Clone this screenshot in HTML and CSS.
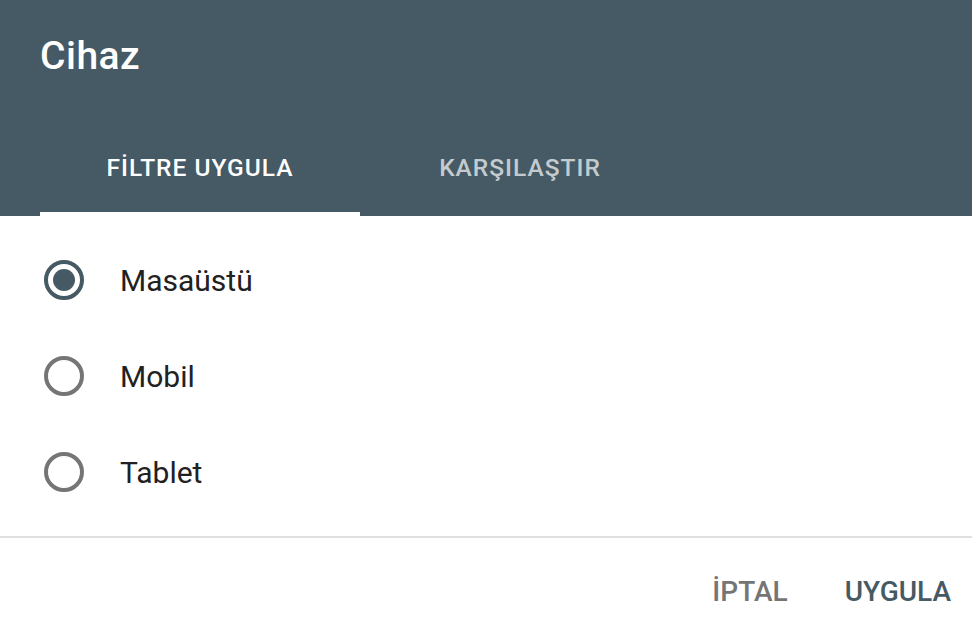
FILE: index.html
```html
<!DOCTYPE html>
<html lang="tr">
<head>
  <meta charset="UTF-8" />
  <meta name="viewport" content="width=device-width, initial-scale=1.0" />
  <title>Cihaz</title>
  <link rel="stylesheet" href="styles.css">
</head>
<body>
  <div class="dialog">
    <div class="dialog-header">
      <h1 class="dialog-title">Cihaz</h1>
      <div class="tabs">
        <div class="tab active">FİLTRE UYGULA</div>
        <div class="tab">KARŞILAŞTIR</div>
      </div>
    </div>

    <div class="options">
      <label class="option">
        <input type="radio" name="device" value="desktop" checked />
        <span class="option-label">Masaüstü</span>
      </label>
      <label class="option">
        <input type="radio" name="device" value="mobile" />
        <span class="option-label">Mobil</span>
      </label>
      <label class="option">
        <input type="radio" name="device" value="tablet" />
        <span class="option-label">Tablet</span>
      </label>
    </div>

    <div class="actions">
      <button class="btn btn-cancel">İPTAL</button>
      <button class="btn btn-apply">UYGULA</button>
    </div>
  </div>
</body>
</html>
```

FILE: styles.css
```css
body {
  margin: 0;
  padding: 0;
  font-family: Roboto, "Liberation Sans", Arial, sans-serif;
  background: #fff;
  color: #212121;
}
.dialog {
  width: 972px;
  height: 630px;
  background: #fff;
  overflow: hidden;
}
.dialog-header {
  background: #455a64;
  padding-top: 30px;
}
.dialog-title {
  margin: 0;
  padding: 0 40px;
  font-size: 39px;
  font-weight: 500;
  letter-spacing: 0.5px;
  line-height: 52px;
  color: #fff;
}
.tabs {
  display: flex;
  margin-top: 50px;
  padding-left: 40px;
}
.tab {
  width: 320px;
  height: 84px;
  box-sizing: border-box;
  padding-bottom: 10px;
  border-bottom: 4px solid transparent;
  display: flex;
  align-items: center;
  justify-content: center;
  font-size: 24.5px;
  font-weight: 500;
  letter-spacing: 1px;
  color: rgba(255, 255, 255, 0.7);
}
.tab.active {
  color: #fff;
  border-bottom-color: #fff;
}
.options {
  padding: 16px 0;
}
.option {
  height: 96px;
  display: flex;
  align-items: center;
  padding-left: 44px;
  cursor: pointer;
}
.option input {
  appearance: none;
  -webkit-appearance: none;
  margin: 0;
  width: 40px;
  height: 40px;
  box-sizing: border-box;
  border: 4px solid #757575;
  border-radius: 50%;
  display: flex;
  align-items: center;
  justify-content: center;
}
.option input:checked {
  border-color: #455a64;
}
.option input:checked::after {
  content: "";
  width: 22px;
  height: 22px;
  border-radius: 50%;
  background: #455a64;
}
.option-label {
  margin-left: 36px;
  font-size: 30px;
  color: #212121;
}
.actions {
  border-top: 2px solid #e0e0e0;
  display: flex;
  justify-content: flex-end;
  gap: 29px;
  padding: 25px 7px 0 0;
}
.btn {
  background: none;
  border: none;
  padding: 0 14px;
  height: 56px;
  font-family: inherit;
  font-size: 28px;
  font-weight: 500;
  cursor: pointer;
}
.btn-cancel {
  color: #757575;
}
.btn-apply {
  color: #455a64;
}
```
